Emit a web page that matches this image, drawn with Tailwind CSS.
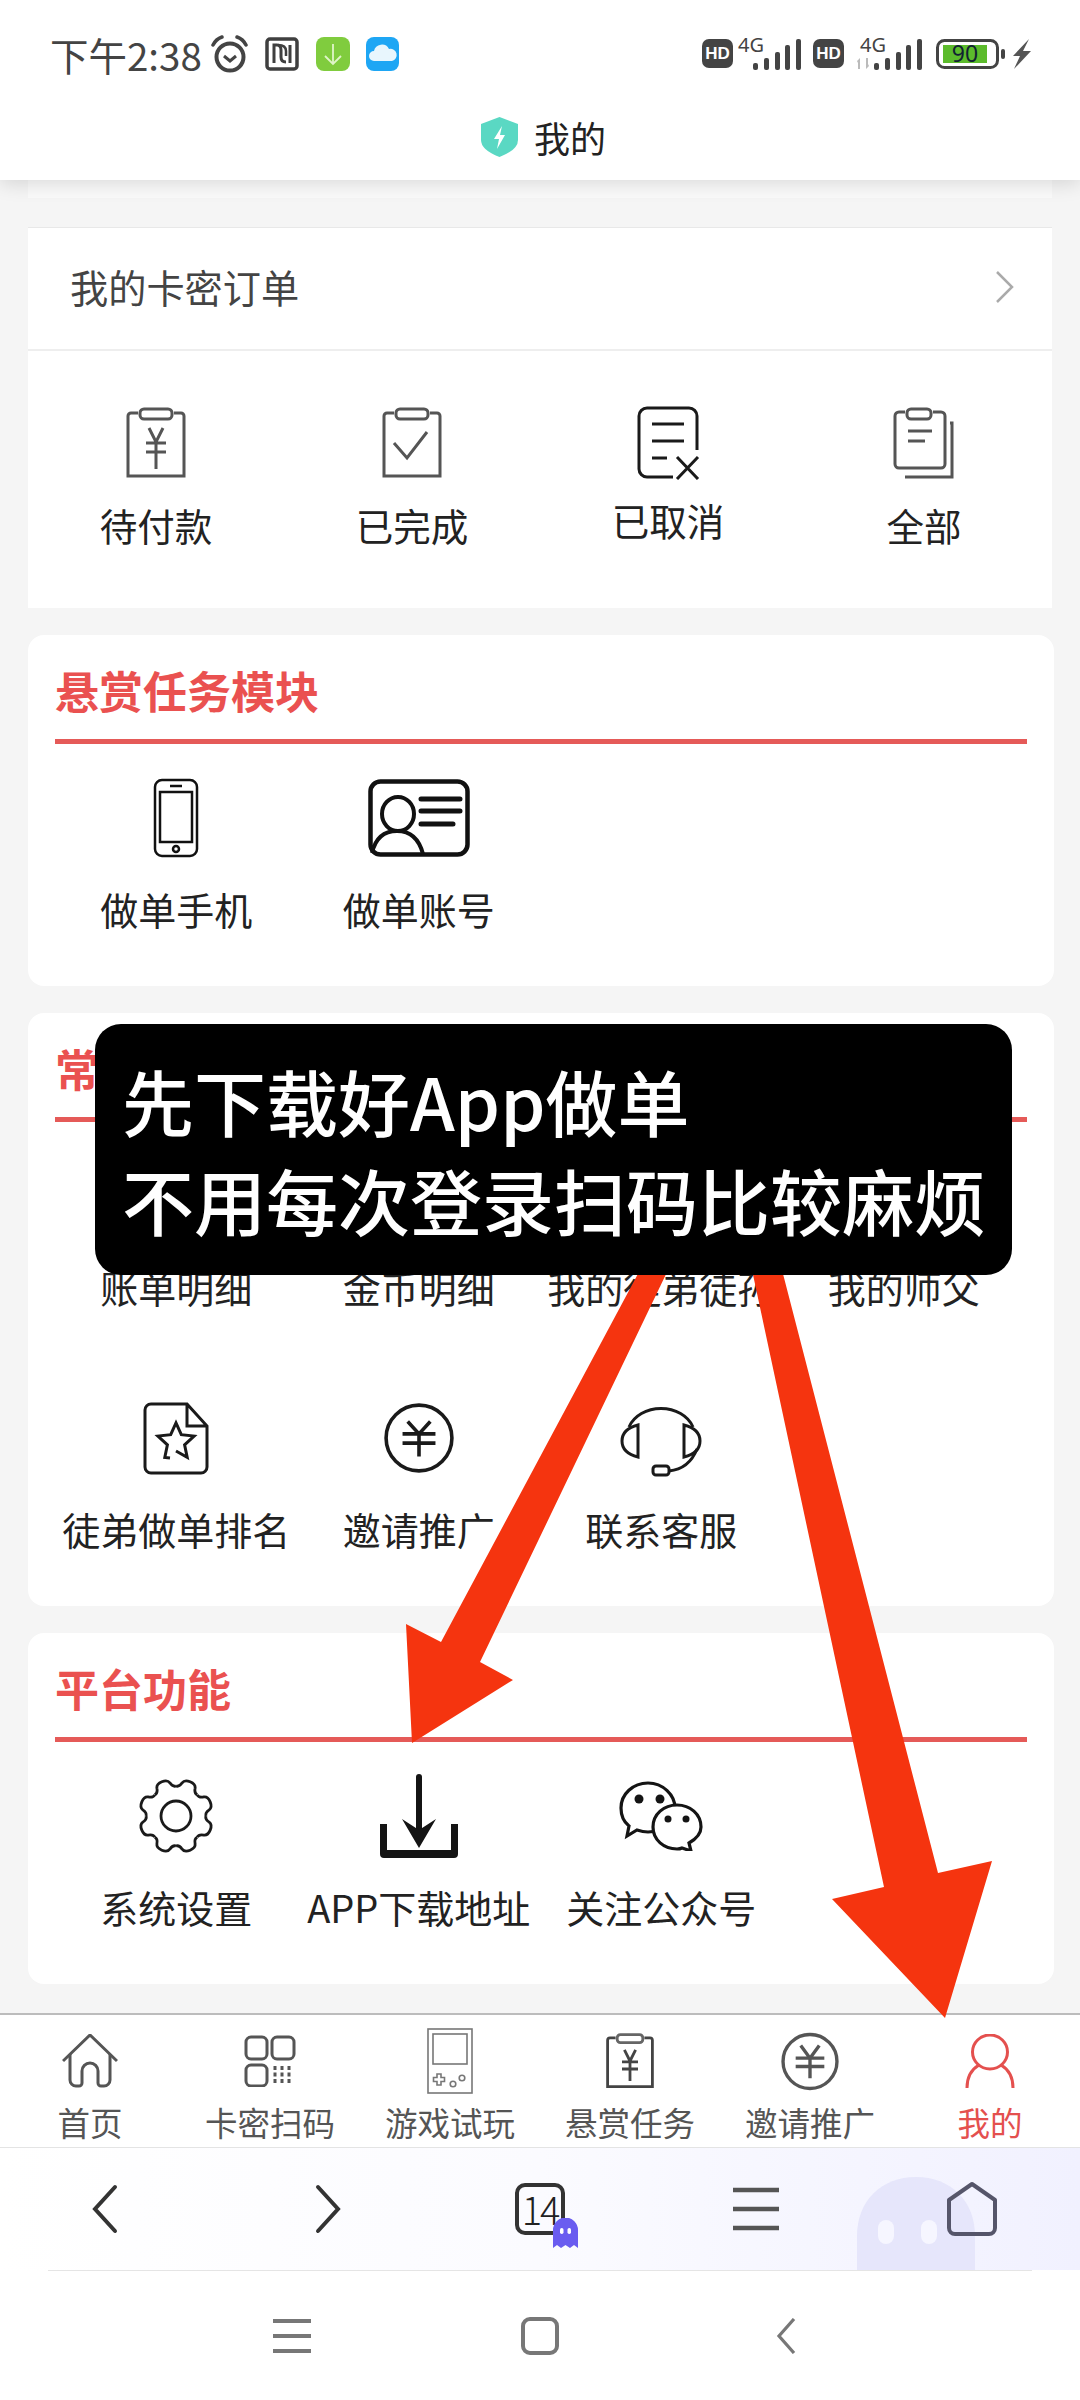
<!DOCTYPE html>
<html lang="zh-CN">
<head>
<meta charset="utf-8">
<title>我的</title>
<script src="https://cdn.jsdelivr.net/npm/@tailwindcss/browser@4"></script>
</head>
<body class="m-0">
<div class="relative w-[1080px] h-[2400px] overflow-hidden bg-[#f5f5f5] flex flex-col font-['Noto_Sans_CJK_SC','Noto_Sans',sans-serif] text-[#222]">

  <!-- header -->
  <header class="relative z-10 h-[180px] bg-white shadow-[0_4px_18px_rgba(0,0,0,0.13)] shrink-0">
    <div class="h-[108px] flex items-center justify-between pl-[50px] pr-[48px]">
      <div class="flex items-center">
        <span class="text-[38.500px] leading-none text-[#444] w-[152px] whitespace-nowrap">下午2:38</span>
        <svg class="ml-[8px]" width="39" height="38" viewBox="0 0 39 38" fill="none" stroke="#444"><circle cx="20" cy="22" r="13.500" stroke-width="4"/><path d="M14 21l6 5 6-5" stroke-width="3"/><path d="M3 10Q6 4 12 2M36 10Q33 4 27 2" stroke-width="3.500" stroke-linecap="round"/></svg>
        <svg class="ml-[16px]" width="34" height="34" viewBox="0 0 34 34" fill="none" stroke="#3f3f3f"><rect x="2" y="2" width="30" height="30" rx="3" stroke-width="3.500"/><path d="M9 26V8h3q4 0 4 5v7q0 5 5 5M25 8v18" stroke-width="3"/><path d="M13 8q8 0 8 6v5" stroke-width="2.500"/></svg>
        <svg class="ml-[17px]" width="34" height="34" viewBox="0 0 34 34" fill="none"><rect width="34" height="34" rx="8" fill="#80cc3e"/><path d="M17 7v20M9 19l8 8 8-8" stroke="#dff5c8" stroke-width="1.800"/></svg>
        <svg class="ml-[16px]" width="33" height="34" viewBox="0 0 33 34" fill="none"><rect width="33" height="34" rx="8" fill="#1ea6f4"/><path d="M8 24a5 5 0 0 1 0-10 8 8 0 0 1 15-2 6 6 0 0 1 3 12z" fill="#e8f6fd"/></svg>
      </div>
      <svg width="332" height="60" viewBox="0 0 332 60" fill="#444">
        <g transform="translate(-700 -24)">
        <rect x="702" y="39" width="31" height="29" rx="7"/>
        <text x="717.500" y="59" font-size="17" font-weight="700" fill="#fff" text-anchor="middle" font-family="Liberation Sans">HD</text>
        <text x="738" y="52" font-size="20" font-family="Noto Sans">4G</text>
        <rect x="753" y="63" width="5" height="7" rx="2"/><rect x="764" y="58" width="5" height="12" rx="2"/><rect x="775" y="52" width="5" height="18" rx="2"/><rect x="785" y="45" width="5" height="25" rx="2"/><rect x="796" y="39" width="5" height="31" rx="2"/>
        <rect x="813" y="39" width="31" height="29" rx="7"/>
        <text x="828.500" y="59" font-size="17" font-weight="700" fill="#fff" text-anchor="middle" font-family="Liberation Sans">HD</text>
        <text x="860" y="52" font-size="20" font-family="Noto Sans">4G</text>
        <path d="M857 61l3-3v11h-2v-6zM869 66l-3 3V58h2v6z" fill="#bbb"/>
        <rect x="874" y="63" width="5" height="7" rx="2"/><rect x="885" y="58" width="5" height="12" rx="2"/><rect x="896" y="52" width="5" height="18" rx="2"/><rect x="906" y="45" width="5" height="25" rx="2"/><rect x="917" y="39" width="5" height="31" rx="2"/>
        <rect x="937.500" y="40.500" width="60" height="27" rx="7" fill="none" stroke="#444" stroke-width="3"/>
        <rect x="943" y="45" width="44" height="18" fill="#5cbb2c"/>
        <text x="965" y="62" font-size="23" fill="#123" text-anchor="middle" font-family="Noto Sans">90</text>
        <rect x="1001" y="49" width="4" height="10" rx="2"/>
        <path d="M1029 39l-16 17h7l-6 13 17-18h-8z" fill="#555"/>
        </g>
      </svg>
    </div>
    <div class="h-[60px] pl-[7px] pb-[2px] flex items-center justify-center">
      <svg width="37" height="40" viewBox="0 0 37 40"><path d="M18.500 0L37 7v16q0 10-18.500 17Q0 33 0 23V7z" fill="#5ad8c3"/><path d="M21 9l-8 13h5l-2 10 8-14h-5z" fill="#fff"/></svg>
      <span class="ml-[16px] text-[36px] leading-[44px] text-[#222]">我的</span>
    </div>
  </header>

  <main class="flex-1 min-h-0">
    <div class="mx-[28px] h-[18px] bg-[#fafafa]"></div>

    <!-- orders -->
    <section class="mx-[28px] mt-[29px] h-[381px] bg-white border-t border-[#e8e8e8]">
      <div class="h-[123px] flex items-center justify-between pl-[42px] pr-[37px] pb-[3px] border-b-2 border-[#eeeeee]">
        <span class="text-[38.200px] leading-none text-[#444]">我的卡密订单</span>
        <svg width="20" height="32" viewBox="0 0 20 32" fill="none" stroke="#aaa" stroke-width="2.500"><path d="M2 1l15 15L2 31"/></svg>
      </div>
      <div class="grid grid-cols-4 pt-[56px]">
        <div class="flex flex-col items-center">
          <div class="h-[72px] flex items-center justify-center">
            <svg width="62" height="72" viewBox="0 0 62 72" fill="none" stroke="#555" stroke-width="3"><path d="M13 6H6a3 3 0 0 0-3 3v60h56V9a3 3 0 0 0-3-3h-7"/><rect x="15" y="2" width="32" height="10" rx="4"/><path d="M24 21l7 14 7-14M21 36h20M21 45h20M31 35v27"/></svg>
          </div>
          <span class="mt-[21px] text-[37.500px] leading-[50px]">待付款</span>
        </div>
        <div class="flex flex-col items-center">
          <div class="h-[72px] flex items-center justify-center">
            <svg width="62" height="72" viewBox="0 0 62 72" fill="none" stroke="#555" stroke-width="3"><path d="M13 6H6a3 3 0 0 0-3 3v60h56V9a3 3 0 0 0-3-3h-7"/><rect x="15" y="2" width="32" height="10" rx="4"/><path d="M13 36l13 15 20-26"/></svg>
          </div>
          <span class="mt-[21px] text-[37.500px] leading-[50px]">已完成</span>
        </div>
        <div class="flex flex-col items-center">
          <div class="h-[72px] flex items-center justify-center">
            <svg width="64" height="74" viewBox="0 0 64 74" fill="none" stroke="#1a1a1a" stroke-width="3"><path d="M37 71H11a8 8 0 0 1-8-8V10a8 8 0 0 1 8-8h42a8 8 0 0 1 8 8v34"/><path d="M16 18h32M16 35h32M16 52h15M41 51l21 22M62 51L41 73"/></svg>
          </div>
          <span class="mt-[16px] text-[37.500px] leading-[50px]">已取消</span>
        </div>
        <div class="flex flex-col items-center">
          <div class="h-[72px] flex items-center justify-center">
            <svg width="64" height="72" viewBox="0 0 64 72" fill="none" stroke="#555" stroke-width="3"><path d="M13 5H7a4 4 0 0 0-4 4v48a4 4 0 0 0 4 4h42a4 4 0 0 0 4-4V9a4 4 0 0 0-4-4h-8"/><rect x="15" y="2" width="24" height="10" rx="4"/><path d="M16 24h24M16 34h17M58 16h2v54H13"/></svg>
          </div>
          <span class="mt-[21px] text-[37.500px] leading-[50px]">全部</span>
        </div>
      </div>
    </section>

    <!-- 悬赏任务模块 -->
    <section class="ml-[28px] mr-[26px] mt-[27px] pl-[27px] pr-[27px] pb-[52px] bg-white rounded-[16px]">
      <h2 class="h-[109px] pt-[25px] border-b-[5px] border-[#e55a58] text-[44px] leading-[60px] font-bold text-[#ea5150]">悬赏任务模块</h2>
      <div class="grid grid-cols-4 mr-[2px] text-[38px] leading-[50px]">
        <div class="flex flex-col items-center pt-[29px]">
          <div class="h-[90px] flex items-center justify-center">
            <svg width="46" height="80" viewBox="0 0 46 80" fill="none" stroke="#111" stroke-width="2.500"><rect x="2" y="2" width="42" height="76" rx="7"/><rect x="7" y="14" width="32" height="50"/><path d="M17 8h12"/><circle cx="23" cy="71" r="3"/></svg>
          </div>
          <span class="mt-[21px] whitespace-nowrap">做单手机</span>
        </div>
        <div class="flex flex-col items-center pt-[29px]">
          <div class="h-[90px] flex items-center justify-center">
            <svg width="104" height="78" viewBox="0 0 102 78" fill="none" stroke="#111" stroke-width="4"><rect x="2.500" y="2.500" width="97" height="73" rx="10" stroke-width="4.500"/><ellipse cx="30" cy="35" rx="16" ry="17"/><path d="M4 74q5-22 25-22t26 23"/><path d="M53 20h39M53 32h39M53 45h32" stroke-width="5" stroke-linecap="round"/></svg>
          </div>
          <span class="mt-[21px] whitespace-nowrap">做单账号</span>
        </div>
      </div>
    </section>

    <!-- 常用功能 -->
    <section class="ml-[28px] mr-[26px] mt-[27px] pl-[27px] pr-[27px] pb-[52px] bg-white rounded-[16px]">
      <h2 class="h-[109px] pt-[25px] border-b-[5px] border-[#e55a58] text-[44px] leading-[60px] font-bold text-[#ea5150]">常用功能</h2>
      <div class="grid grid-cols-4 mr-[2px] gap-y-[52px] text-[38px] leading-[50px]">
        <div class="flex flex-col items-center pt-[29px]"><div class="h-[90px]"></div><span class="mt-[21px] whitespace-nowrap">账单明细</span></div>
        <div class="flex flex-col items-center pt-[29px]"><div class="h-[90px]"></div><span class="mt-[21px] whitespace-nowrap">金币明细</span></div>
        <div class="flex flex-col items-center pt-[29px]"><div class="h-[90px]"></div><span class="mt-[21px] whitespace-nowrap">我的徒弟徒孙</span></div>
        <div class="flex flex-col items-center pt-[29px]"><div class="h-[90px]"></div><span class="mt-[21px] whitespace-nowrap">我的师父</span></div>
        <div class="flex flex-col items-center pt-[29px]">
          <div class="h-[90px] flex items-center justify-center">
            <svg width="66" height="73" viewBox="0 0 66 73" fill="none" stroke="#1a1a1a" stroke-width="3"><path d="M44 2H8a6 6 0 0 0-6 6v57a6 6 0 0 0 6 6h50a6 6 0 0 0 6-6V24zM44 2v22h20"/><path d="M27 56l-5.200-.6 2.600-12.600-9.500-8.700 12.800-1.400L33 21l5.300 11.700 12.800 1.400-9.500 8.700 2.600 12.600L33 49"/></svg>
          </div>
          <span class="mt-[21px] whitespace-nowrap">徒弟做单排名</span>
        </div>
        <div class="flex flex-col items-center pt-[29px]">
          <div class="h-[90px] flex items-center justify-center">
            <svg width="70" height="72" viewBox="0 0 68 70" fill="none" stroke="#1a1a1a" stroke-width="3.500"><circle cx="34" cy="35" r="32"/><path d="M23 19l11 12 11-12M18 31h32M18 40h32M34 31v22"/></svg>
          </div>
          <span class="mt-[21px] whitespace-nowrap">邀请推广</span>
        </div>
        <div class="flex flex-col items-center pt-[29px]">
          <div class="h-[90px] flex items-center justify-center">
            <svg width="84" height="82" viewBox="618 1398 84 82" fill="none" stroke="#1a1a1a" stroke-width="3"><path d="M628 1428A34 28 0 0 1 692 1428"/><path d="M637 1426v32q-16-4-16-16t16-16zM683 1426v32q16-4 16-16t-16-16z"/><rect x="652" y="1467" width="16" height="9" rx="3"/><path d="M668 1472q20-2 28-22"/></svg>
          </div>
          <span class="mt-[21px] whitespace-nowrap">联系客服</span>
        </div>
      </div>
    </section>

    <!-- 平台功能 -->
    <section class="ml-[28px] mr-[26px] mt-[27px] pl-[27px] pr-[27px] pb-[52px] bg-white rounded-[16px]">
      <h2 class="h-[109px] pt-[25px] border-b-[5px] border-[#e55a58] text-[44px] leading-[60px] font-bold text-[#ea5150]">平台功能</h2>
      <div class="grid grid-cols-4 mr-[2px] text-[38px] leading-[50px]">
        <div class="flex flex-col items-center pt-[29px]">
          <div class="h-[90px] flex items-center justify-center">
            <svg width="78" height="78" viewBox="-39 -39 78 78" fill="none" stroke="#1a1a1a" stroke-width="2.800">
              <defs><path id="t" d="M-11.500-27.700Q-8-28-7-33Q-6-37 0-37Q6-37 7-33Q8-28 11.500-27.700"/></defs>
              <use href="#t" transform="rotate(22.500)"/><use href="#t" transform="rotate(67.500)"/><use href="#t" transform="rotate(112.500)"/><use href="#t" transform="rotate(157.500)"/><use href="#t" transform="rotate(202.500)"/><use href="#t" transform="rotate(247.500)"/><use href="#t" transform="rotate(292.500)"/><use href="#t" transform="rotate(337.500)"/>
              <circle r="15"/>
            </svg>
          </div>
          <span class="mt-[21px] whitespace-nowrap">系统设置</span>
        </div>
        <div class="flex flex-col items-center pt-[29px]">
          <div class="h-[90px] flex items-center justify-center">
            <svg width="78" height="84" viewBox="0 0 78 84" fill="#141414" stroke="none"><rect x="36" y="0" width="6" height="60" rx="3"/><path d="M22 45l17 29 17-29-17 11z"/><path d="M0 50h7v26h64V50h7v30a4 4 0 0 1-4 4H4a4 4 0 0 1-4-4z"/></svg>
          </div>
          <span class="mt-[21px] whitespace-nowrap">APP下载地址</span>
        </div>
        <div class="flex flex-col items-center pt-[29px]">
          <div class="h-[90px] flex items-center justify-center">
            <svg width="84" height="70" viewBox="0 0 84 70" fill="#fff" stroke="#141414" stroke-width="3.200"><path d="M29 2C14 2 2 13 2 27c0 8 3 14 8 18l-2 10 10-6c3 1 7 2 11 2 16 0 27-11 27-24S44 2 29 2z"/><path d="M58 24c-13 0-24 9-24 22s11 22 24 22c2 0 3 0 5-1l9 3-2-8c7-4 12-9 12-16 0-13-11-22-24-22z"/><g fill="#141414" stroke="none"><circle cx="20" cy="18" r="4.500"/><circle cx="41" cy="18" r="4.500"/><circle cx="49" cy="38" r="3.500"/><circle cx="67" cy="38" r="3.500"/></g></svg>
          </div>
          <span class="mt-[21px] whitespace-nowrap">关注公众号</span>
        </div>
      </div>
    </section>
  </main>

  <!-- tab bar -->
  <nav class="grid grid-cols-6 h-[135px] shrink-0 bg-white border-t-2 border-b border-t-[#bcbcbc] border-b-[#e4e4e4] pt-[10px] text-[32.500px] leading-[40px] text-[#555]">
    <a class="flex flex-col items-center"><div class="h-[72px] flex items-center justify-center">
      <svg width="56" height="54" viewBox="0 0 56 54" fill="none" stroke="#555" stroke-width="3"><path d="M1 27L28 1l27 26"/><path d="M8 20v26a6 6 0 0 0 6 6h3a3 3 0 0 0 3-3V37a8 8 0 0 1 16 0v12a3 3 0 0 0 3 3h3a6 6 0 0 0 6-6V20"/></svg>
    </div><span class="mt-[5px]">首页</span></a>
    <a class="flex flex-col items-center"><div class="h-[72px] flex items-center justify-center">
      <svg width="52" height="52" viewBox="0 0 52 52" fill="none" stroke="#555" stroke-width="3"><rect x="2" y="2" width="21" height="22" rx="5"/><rect x="28" y="2" width="22" height="22" rx="5"/><rect x="2" y="30" width="21" height="21" rx="5"/><path d="M31 31v19M38 31v19M45 31v19" stroke-dasharray="4 2.500" stroke-width="3"/></svg>
    </div><span class="mt-[5px] whitespace-nowrap">卡密扫码</span></a>
    <a class="flex flex-col items-center"><div class="h-[72px] flex items-center justify-center">
      <svg width="46" height="66" viewBox="0 0 46 66" fill="none" stroke="#777" stroke-width="1.600"><rect x="1" y="1" width="44" height="64"/><rect x="6" y="6" width="34" height="30"/><path d="M10 46h4v3.500h3.500v4H14V57h-4v-3.500H6.500v-4H10z"/><circle cx="26" cy="56" r="2.800"/><circle cx="35" cy="50" r="2.800"/></svg>
    </div><span class="mt-[5px] whitespace-nowrap">游戏试玩</span></a>
    <a class="flex flex-col items-center"><div class="h-[72px] flex items-center justify-center">
      <svg width="50" height="56" viewBox="0 0 62 70" fill="none" stroke="#444" stroke-width="3.500"><path d="M13 6H6a3 3 0 0 0-3 3v58h56V9a3 3 0 0 0-3-3h-7"/><rect x="15" y="2" width="32" height="10" rx="4" stroke="#666"/><path d="M24 21l7 14 7-14M21 36h20M21 45h20M31 35v25"/></svg>
    </div><span class="mt-[5px] whitespace-nowrap">悬赏任务</span></a>
    <a class="flex flex-col items-center"><div class="h-[72px] flex items-center justify-center">
      <svg width="58" height="59" viewBox="0 0 68 70" fill="none" stroke="#555" stroke-width="4"><circle cx="34" cy="35" r="32"/><path d="M23 16l11 15 11-15M17 31h34M17 41h34M34 31v24"/></svg>
    </div><span class="mt-[5px] whitespace-nowrap">邀请推广</span></a>
    <a class="flex flex-col items-center text-[#e4504e]"><div class="h-[72px] flex items-center justify-center">
      <svg width="50" height="55" viewBox="0 0 50 55" fill="none" stroke="#e4504e" stroke-width="3"><ellipse cx="25" cy="18" rx="17.500" ry="17"/><path d="M2 54q0-16 12-23M48 54q0-16-12-23"/></svg>
    </div><span class="mt-[5px]">我的</span></a>
  </nav>

  <!-- browser bar -->
  <div class="relative h-[122px] shrink-0 grid grid-cols-5 items-center bg-linear-to-r from-white via-[#fbfbff] to-[#f1f1ff]">
    <svg class="absolute left-[857px] top-[29px]" width="118" height="93" viewBox="0 0 118 93"><path d="M0 93V59C0 24 24 0 59 0s59 24 59 59v34z" fill="#e6e6fb"/><rect x="21" y="43" width="16" height="24" rx="8" fill="#f6f6ff"/><rect x="64" y="43" width="16" height="24" rx="8" fill="#f6f6ff"/></svg>
    <div class="flex justify-center relative"><svg class="-ml-[6px]" width="26" height="50" viewBox="0 0 26 50" fill="none" stroke="#333" stroke-width="4" stroke-linecap="round"><path d="M23 3L3 25l20 22"/></svg></div>
    <div class="flex justify-center relative"><svg class="ml-[8px]" width="26" height="50" viewBox="0 0 26 50" fill="none" stroke="#333" stroke-width="4" stroke-linecap="round"><path d="M3 3l20 22L3 47"/></svg></div>
    <div class="flex justify-center relative">
      <div class="relative w-[50px] h-[52px] border-4 border-[#333] rounded-[10px] flex items-center justify-center text-[38px] tracking-[-2px] leading-none text-[#222] font-light">14
        <svg class="absolute left-[34px] top-[31px]" width="25" height="30" viewBox="0 0 25 30"><path d="M0 30V12a12.500 12.500 0 0 1 25 0v18l-4-3-4 3-4.500-3-4.500 3-4-3z" fill="#6a5cf0"/><rect x="7" y="10" width="3.500" height="6" rx="1.700" fill="#fff"/><rect x="14.500" y="10" width="3.500" height="6" rx="1.700" fill="#fff"/></svg>
      </div>
    </div>
    <div class="flex justify-center relative"><svg width="48" height="46" viewBox="0 0 48 46" fill="none" stroke="#555" stroke-width="4.500"><path d="M1 4h46M1 23h46M1 42h46"/></svg></div>
    <div class="flex justify-center relative"><svg width="52" height="54" viewBox="0 0 52 54" fill="none" stroke="#55556a" stroke-width="4" stroke-linejoin="round"><path d="M26 2L49 18v28a6 6 0 0 1-6 6H9a6 6 0 0 1-6-6V18z"/></svg></div>
  </div>

  <!-- system nav -->
  <div class="h-[130px] shrink-0 bg-white">
    <div class="h-px mx-[48px] bg-[#e5e5e5]"></div>
    <div class="h-[129px] w-[744px] mx-auto grid grid-cols-3 items-center">
      <div class="flex justify-center"><svg width="38" height="36" viewBox="0 0 38 36" fill="none" stroke="#777" stroke-width="4"><path d="M0 3h38M0 18h38M0 33h38"/></svg></div>
      <div class="flex justify-center"><svg width="38" height="38" viewBox="0 0 38 38" fill="none" stroke="#777" stroke-width="4"><rect x="2" y="2" width="34" height="34" rx="7"/></svg></div>
      <div class="flex justify-center"><svg class="-ml-[4px]" width="20" height="36" viewBox="0 0 20 36" fill="none" stroke="#777" stroke-width="3.200"><path d="M18 1L3 18l15 17"/></svg></div>
    </div>
  </div>

  <!-- annotation arrows -->
  <svg class="absolute left-0 top-0 pointer-events-none" width="1080" height="2400" viewBox="0 0 1080 2400" fill="#f5340f">
    <polygon points="640,1270 668,1270 480,1662 513,1680 412,1743 406,1624 441,1642"/>
    <polygon points="752,1270 782,1270 938,1873 992,1861 945,2018 832,1899 884,1887"/>
  </svg>

  <!-- annotation box -->
  <div class="absolute left-[95px] top-[1024px] w-[917px] h-[251px] rounded-[26px] bg-black pl-[27px] pt-[26px] text-white text-[72px] leading-[99px] font-medium whitespace-nowrap">
    先下载好App做单<br>不用每次登录扫码比较麻烦
  </div>
</div>
</body>
</html>
